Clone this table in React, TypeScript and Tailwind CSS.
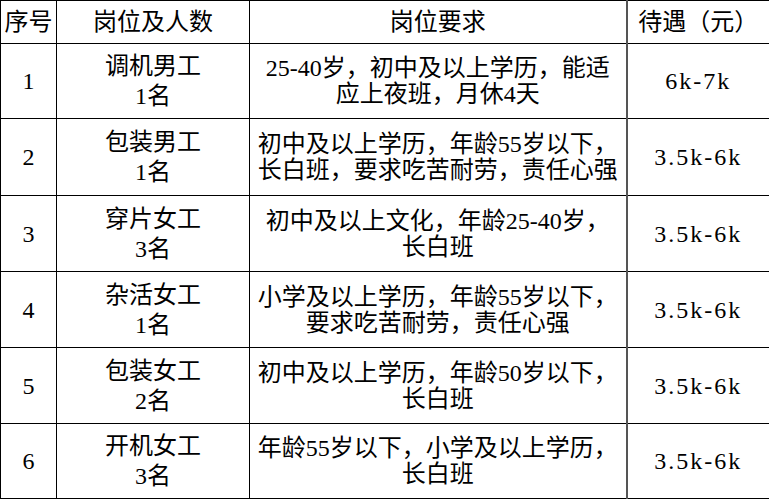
const rows = [
  { no: '1', job: ['调机男工', '1名'], req: ['25-40岁，初中及以上学历，能适', '应上夜班，月休4天'], pay: '6k-7k', h: 'h-[75px]' },
  { no: '2', job: ['包装男工', '1名'], req: ['初中及以上学历，年龄55岁以下，', '长白班，要求吃苦耐劳，责任心强'], pay: '3.5k-6k', h: 'h-[77px]' },
  { no: '3', job: ['穿片女工', '3名'], req: ['初中及以上文化，年龄25-40岁，', '长白班'], pay: '3.5k-6k', h: 'h-[76px]' },
  { no: '4', job: ['杂活女工', '1名'], req: ['小学及以上学历，年龄55岁以下，', '要求吃苦耐劳，责任心强'], pay: '3.5k-6k', h: 'h-[76px]' },
  { no: '5', job: ['包装女工', '2名'], req: ['初中及以上学历，年龄50岁以下，', '长白班'], pay: '3.5k-6k', h: 'h-[76px]' },
  { no: '6', job: ['开机女工', '3名'], req: ['年龄55岁以下，小学及以上学历，', '长白班'], pay: '3.5k-6k', h: 'h-[75px]' },
]

export default function App() {
  return (
    <div className="w-[769px] h-[500px] bg-white text-black overflow-hidden font-['Liberation_Serif','Noto_Sans_CJK_SC',serif] text-[24px]">
      <table className="table-fixed border-collapse w-[769px]">
        <colgroup>
          <col className="w-[56px]" />
          <col className="w-[193px]" />
          <col className="w-[377px]" />
          <col className="w-[143px]" />
        </colgroup>
        <thead>
          <tr className="h-[43px]">
            <th className="border border-black font-normal p-0 text-center">序号</th>
            <th className="border border-black font-normal p-0 text-center">岗位及人数</th>
            <th className="border border-black border-r-2 border-r-[#555] font-normal p-0 text-center">岗位要求</th>
            <th className="border border-black font-normal p-0 text-center">待遇（元）</th>
          </tr>
        </thead>
        <tbody>
          {rows.map((r) => (
            <tr key={r.no} className={r.h}>
              <td className="border border-black p-0 text-center align-middle">{r.no}</td>
              <td className="border border-black p-0 text-center align-middle leading-[30px]">
                {r.job[0]}
                <br />
                {r.job[1]}
              </td>
              <td className="border border-black border-r-2 border-r-[#555] p-0 text-center align-middle leading-[26px] whitespace-nowrap">
                {r.req[0]}
                <br />
                {r.req[1]}
              </td>
              <td className="border border-black p-0 text-center align-middle tracking-[2px]">{r.pay}</td>
            </tr>
          ))}
        </tbody>
      </table>
    </div>
  )
}
